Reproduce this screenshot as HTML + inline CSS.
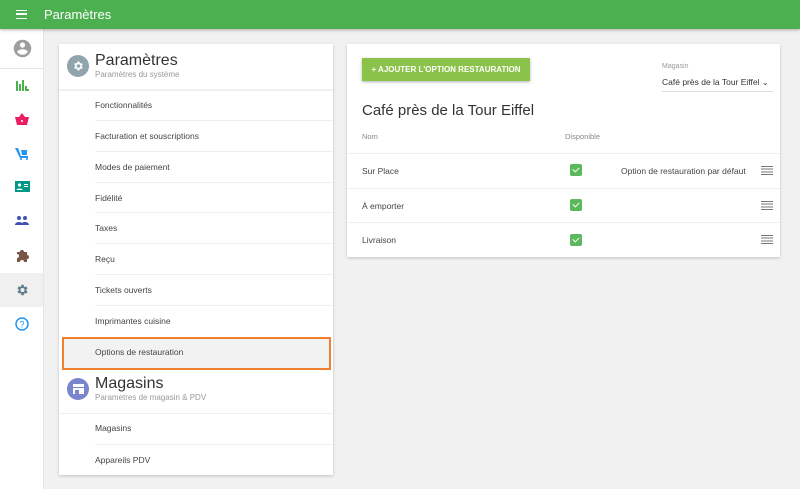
<!DOCTYPE html>
<html><head><meta charset="utf-8"><style>
*{box-sizing:border-box;margin:0;padding:0}
body{width:800px;height:489px;background:#f1f1f1;font-family:"Liberation Sans",sans-serif;position:relative;overflow:hidden;color:#333}
.top{position:absolute;left:0;top:0;width:800px;height:29px;background:#4caf50;box-shadow:0 1px 3px rgba(0,0,0,.3);z-index:2}
.top .t{position:absolute;left:44px;top:7px;color:#fff;font-size:13px}
.side{position:absolute;left:0;top:29px;width:44px;height:460px;background:#fff;border-right:1px solid #e5e5e5}
.ic{position:absolute;left:0;width:44px;display:flex;justify-content:center}
.card{position:absolute;background:#fff;box-shadow:0 1px 3px rgba(0,0,0,.2)}
.it{position:absolute;left:36px;right:0;font-size:8.5px;color:#444;height:31px;line-height:31px;border-top:1px solid #eee}
.a{position:absolute;font-size:8.5px;color:#444}
.hr{position:absolute;left:0;right:0;height:1px;background:#eee}
.cb{position:absolute;left:223px;width:12px;height:12px;background:#5cb85c;border-radius:2px}
.cb:after{content:"";position:absolute;left:3px;top:2.5px;width:5px;height:3px;border-left:1.3px solid #fff;border-bottom:1.3px solid #fff;transform:rotate(-45deg)}
.dr{position:absolute;left:414px;width:12px;height:9px;background:repeating-linear-gradient(#777 0 1px,transparent 1px 2.67px)}
</style></head><body>
<div class="top"><div style="position:absolute;left:16px;top:10px;width:11px;height:9px;border-top:1.6px solid #fff;border-bottom:1.6px solid #fff"><div style="margin-top:2.2px;height:1.6px;background:#fff"></div></div><div class="t">Paramètres</div></div>
<div class="side">
<div class="ic" style="top:9px"><svg width="21" height="21" viewBox="0 0 24 24"><path fill="#9e9e9e" d="M12 2a10 10 0 100 20 10 10 0 000-20zm0 3a3 3 0 110 6 3 3 0 010-6zm0 14.2a7.2 7.2 0 01-6-3.2c0-2 4-3.1 6-3.1s6 1.1 6 3.1a7.2 7.2 0 01-6 3.2z"/></svg></div>
<div style="position:absolute;top:39px;left:0;right:0;height:1px;background:#e5e5e5"></div>
<div class="ic" style="top:50px"><svg width="13" height="12" viewBox="0 0 13 12"><path fill="#4caf50" d="M0 2h2v10H0zM3 5h2v7H3zM6 1h2v11H6zM9 7h2v5H9zM11 10h2v2h-2z"/></svg></div>
<div class="ic" style="top:84px"><svg width="14" height="12" viewBox="0 0 14 12"><path fill="#e91e63" d="M4 4L7 0l3 4h4l-2 8H2L0 4zm3 3a1 1 0 100 2 1 1 0 000-2z"/></svg></div>
<div class="ic" style="top:118px"><svg width="14" height="14" viewBox="0 0 14 14"><path fill="#2196f3" d="M0 1h3l3 8h7v2H5zM6 3h6v5H7zM5 12a1 1 0 102 0 1 1 0 00-2 0zm6 0a1 1 0 102 0 1 1 0 00-2 0z"/></svg></div>
<div class="ic" style="top:152px"><svg width="15" height="11" viewBox="0 0 15 11"><rect width="15" height="11" fill="#009688"/><circle cx="4.5" cy="4" r="1.6" fill="#fff"/><path fill="#fff" d="M1.5 9c0-2 6-2 6 0zM9 3h4v1H9zM9 5h4v1H9z"/></svg></div>
<div class="ic" style="top:187px"><svg width="14" height="9" viewBox="0 0 14 9"><circle cx="4" cy="2" r="2" fill="#3f51b5"/><circle cx="10" cy="2" r="2" fill="#3f51b5"/><path fill="#3f51b5" d="M0 9c0-4 8-4 8 0zM6 9c0-4 8-4 8 0z"/></svg></div>
<div class="ic" style="top:220px"><svg width="13" height="13" viewBox="0 0 13 13"><path fill="#795548" d="M1 3h3a2 2 0 114 0h3v3a2 2 0 110 4v3H8a2 2 0 10-4 0H1V9a2 2 0 100-4z"/></svg></div>
<div style="position:absolute;top:244px;left:0;width:43px;height:34px;background:#f0f0f0"></div>
<div class="ic" style="top:254px"><svg width="14" height="14" viewBox="0 0 24 24"><path fill="#607d8b" d="M19.4 13a7.5 7.5 0 000-2l2.1-1.6-2-3.5-2.5 1a7 7 0 00-1.7-1L14.9 3h-4l-.4 2.7a7 7 0 00-1.7 1l-2.5-1-2 3.5L6.4 11a7.5 7.5 0 000 2l-2.1 1.6 2 3.5 2.5-1a7 7 0 001.7 1l.4 2.9h4l.4-2.7a7 7 0 001.7-1l2.5 1 2-3.5zM12.9 15.5a3.5 3.5 0 110-7 3.5 3.5 0 010 7z"/></svg></div>
<div class="ic" style="top:288px"><svg width="14" height="14" viewBox="0 0 14 14"><circle cx="7" cy="7" r="6" fill="none" stroke="#2196f3" stroke-width="1.5"/><text x="7" y="10.5" font-size="9" font-family="Liberation Sans" fill="#2196f3" text-anchor="middle">?</text></svg></div>
</div>

<div class="card" style="left:59px;top:44px;width:274px;height:431px">
<div style="position:absolute;left:8px;top:11px;width:22px;height:22px;border-radius:50%;background:#90a4ae;display:flex;align-items:center;justify-content:center"><svg width="12" height="12" viewBox="0 0 24 24"><path fill="#fff" d="M19.4 13a7.5 7.5 0 000-2l2.1-1.6-2-3.5-2.5 1a7 7 0 00-1.7-1L14.9 3h-4l-.4 2.7a7 7 0 00-1.7 1l-2.5-1-2 3.5L6.4 11a7.5 7.5 0 000 2l-2.1 1.6 2 3.5 2.5-1a7 7 0 001.7 1l.4 2.9h4l.4-2.7a7 7 0 001.7-1l2.5 1 2-3.5zM12.9 15.5a3.5 3.5 0 110-7 3.5 3.5 0 010 7z"/></svg></div>
<div style="position:absolute;left:36px;top:8px;font-size:16px;color:#333">Paramètres</div>
<div style="position:absolute;left:36px;top:26px;font-size:8px;color:#999">Paramètres du système</div>
<div class="hr" style="top:45px;background:#f0f0f0;height:2px"></div>
<div class="it" style="top:46px;border-top:none">Fonctionnalités</div>
<div class="it" style="top:76px">Facturation et souscriptions</div>
<div class="it" style="top:107px">Modes de paiement</div>
<div class="it" style="top:138px">Fidélité</div>
<div class="it" style="top:168px">Taxes</div>
<div class="it" style="top:199px">Reçu</div>
<div class="it" style="top:230px">Tickets ouverts</div>
<div class="it" style="top:261px">Imprimantes cuisine</div>
<div style="position:absolute;left:3px;top:293px;width:269px;height:33px;background:#f2f2f2;border:2px solid #f08030"></div>
<div class="a" style="left:36px;top:303px">Options de restauration</div>
<div style="position:absolute;left:8px;top:334px;width:22px;height:22px;border-radius:50%;background:#7986cb;display:flex;align-items:center;justify-content:center"><svg width="11" height="10" viewBox="0 0 11 10"><path fill="#fff" d="M0 0h11v3H0zM0 4h11v6H6V6H2v4H0z"/></svg></div>
<div style="position:absolute;left:36px;top:331px;font-size:16px;color:#333">Magasins</div>
<div style="position:absolute;left:36px;top:349px;font-size:8px;color:#999">Parametres de magasin &amp; PDV</div>
<div class="hr" style="top:369px"></div>
<div class="it" style="top:369px;border-top:none">Magasins</div>
<div class="it" style="top:400px">Appareils PDV</div>
</div>

<div class="card" style="left:347px;top:44px;width:433px;height:213px">
<div style="position:absolute;left:15px;top:14px;width:168px;height:23px;background:#8bc34a;box-shadow:0 1px 3px rgba(0,0,0,.3);color:#fff;font-size:8px;font-weight:bold;line-height:23px;text-align:center">+ AJOUTER L'OPTION RESTAURATION</div>
<div style="position:absolute;left:315px;top:19px;font-size:7px;color:#999">Magasin</div>
<div class="a" style="left:315px;top:33px;color:#333">Café près de la Tour Eiffel <span style="font-size:8px">⌄</span></div>
<div style="position:absolute;left:315px;top:47px;width:111px;height:1px;background:#ddd"></div>
<div style="position:absolute;left:15px;top:58px;font-size:15px;color:#333">Café près de la Tour Eiffel</div>
<div style="position:absolute;left:15px;top:88px;font-size:7.5px;color:#888">Nom</div>
<div style="position:absolute;left:218px;top:88px;font-size:7.5px;color:#888">Disponible</div>
<div class="hr" style="top:109px"></div>
<div class="a" style="left:15px;top:122px">Sur Place</div><div class="cb" style="top:120px"></div>
<div class="a" style="left:274px;top:122px">Option de restauration par défaut</div><div class="dr" style="top:122px"></div>
<div class="hr" style="top:144px"></div>
<div class="a" style="left:15px;top:157px">À emporter</div><div class="cb" style="top:155px"></div><div class="dr" style="top:157px"></div>
<div class="hr" style="top:178px"></div>
<div class="a" style="left:15px;top:191px">Livraison</div><div class="cb" style="top:190px"></div><div class="dr" style="top:191px"></div>
</div>
</body></html>
